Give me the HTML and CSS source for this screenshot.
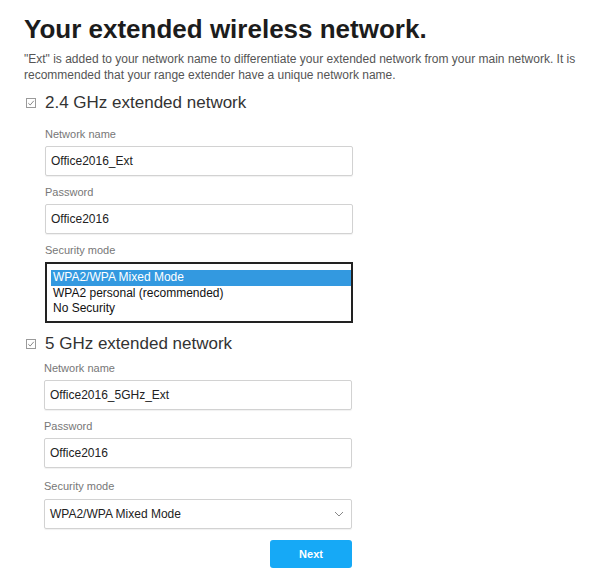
FILE: index.html
```html
<!DOCTYPE html>
<html>
<head>
<meta charset="utf-8">
<link rel="stylesheet" href="styles.css">
</head>
<body>
<div class="page">
  <h1 class="title">Your extended wireless network.</h1>
  <p class="intro">"Ext" is added to your network name to differentiate your extended network from your main network. It is recommended that your range extender have a unique network name.</p>

  <section class="band band-24">
    <div class="band-head">
      <svg class="check" width="10" height="10" viewBox="0 0 10 10"><rect x="0.5" y="0.5" width="9" height="9" fill="#fff" stroke="#9a9a9a"/><path d="M2.3 5.2 L4.2 7 L7.8 2.8" fill="none" stroke="#8a8a8a" stroke-width="1"/></svg>
      <span class="band-title">2.4 GHz extended network</span>
    </div>
    <div class="fields">
      <label class="lbl">Network name</label>
      <div class="input">Office2016_Ext</div>
      <label class="lbl">Password</label>
      <div class="input">Office2016</div>
      <label class="lbl">Security mode</label>
      <div class="listbox">
        <div class="opt opt-sel">WPA2/WPA Mixed Mode</div>
        <div class="opt">WPA2 personal (recommended)</div>
        <div class="opt">No Security</div>
      </div>
    </div>
  </section>

  <section class="band band-5">
    <div class="band-head">
      <svg class="check" width="10" height="10" viewBox="0 0 10 10"><rect x="0.5" y="0.5" width="9" height="9" fill="#fff" stroke="#9a9a9a"/><path d="M2.3 5.2 L4.2 7 L7.8 2.8" fill="none" stroke="#8a8a8a" stroke-width="1"/></svg>
      <span class="band-title">5 GHz extended network</span>
    </div>
    <div class="fields fields-5">
      <label class="lbl">Network name</label>
      <div class="input">Office2016_5GHz_Ext</div>
      <label class="lbl">Password</label>
      <div class="input input-gap">Office2016</div>
      <label class="lbl lbl-sel">Security mode</label>
      <div class="input select">
        <span>WPA2/WPA Mixed Mode</span>
        <svg class="chev" width="10" height="6" viewBox="0 0 10 6"><path d="M1 1 L5 5 L9 1" fill="none" stroke="#888" stroke-width="1"/></svg>
      </div>
      <div class="actions"><button class="next">Next</button></div>
    </div>
  </section>
</div>
</body>
</html>
```

FILE: styles.css
```css
html, body {
  margin: 0;
  padding: 0;
  background: #fff;
}
body {
  font-family: "Liberation Sans", Arial, sans-serif;
  color: #222;
}
.page {
  padding: 0 10px 0 24px;
}
.title {
  margin: 0;
  padding-top: 13px;
  font-size: 26px;
  line-height: 32px;
  font-weight: bold;
  color: #1c1c1c;
}
.intro {
  margin: 6px 0 0;
  font-size: 12px;
  line-height: 16px;
  color: #555;
}
.band-24 {
  margin-top: 10px;
}
.band-head {
  display: flex;
  align-items: center;
  height: 20px;
}
.check {
  margin-left: 2px;
  margin-right: 9px;
  display: block;
}
.band-title {
  font-size: 17px;
  line-height: 20px;
  color: #333;
}
.fields {
  display: flex;
  flex-direction: column;
  margin-left: 21px;
  width: 308px;
  padding-top: 14px;
}
.fields-5 {
  margin-left: 20px;
  padding-top: 7px;
}
.lbl {
  display: block;
  font-size: 11px;
  line-height: 14px;
  color: #777;
  margin-bottom: 5px;
}
.input {
  box-sizing: border-box;
  height: 30px;
  border: 1px solid #d2d2d2;
  border-radius: 2px;
  box-shadow: 0 1px 1px rgba(0,0,0,0.06);
  padding: 0 5px;
  font-size: 12px;
  line-height: 28px;
  color: #222;
  margin-bottom: 9px;
}
.input-gap {
  margin-bottom: 11px;
}
.lbl-sel {
  margin-bottom: 6px;
}
.listbox {
  box-sizing: border-box;
  height: 61px;
  border: 2px solid #222;
  padding: 6px 0 0 4px;
  font-size: 12px;
  line-height: 15.5px;
  color: #111;
}
.opt {
  padding-left: 2px;
  white-space: nowrap;
}
.opt-sel {
  background: #3399e0;
  color: #fff;
}
.band-5 {
  margin-top: 11px;
}
.select {
  display: flex;
  align-items: center;
  justify-content: space-between;
  margin-bottom: 11px;
  padding-right: 7px;
}
.chev {
  display: block;
}
.actions {
  display: flex;
  justify-content: flex-end;
}
.next {
  width: 82px;
  height: 28px;
  border: 0;
  border-radius: 3px;
  background: #16a9f6;
  color: #fff;
  font-family: "Liberation Sans", Arial, sans-serif;
  font-weight: bold;
  font-size: 11px;
  padding: 0;
}
```
